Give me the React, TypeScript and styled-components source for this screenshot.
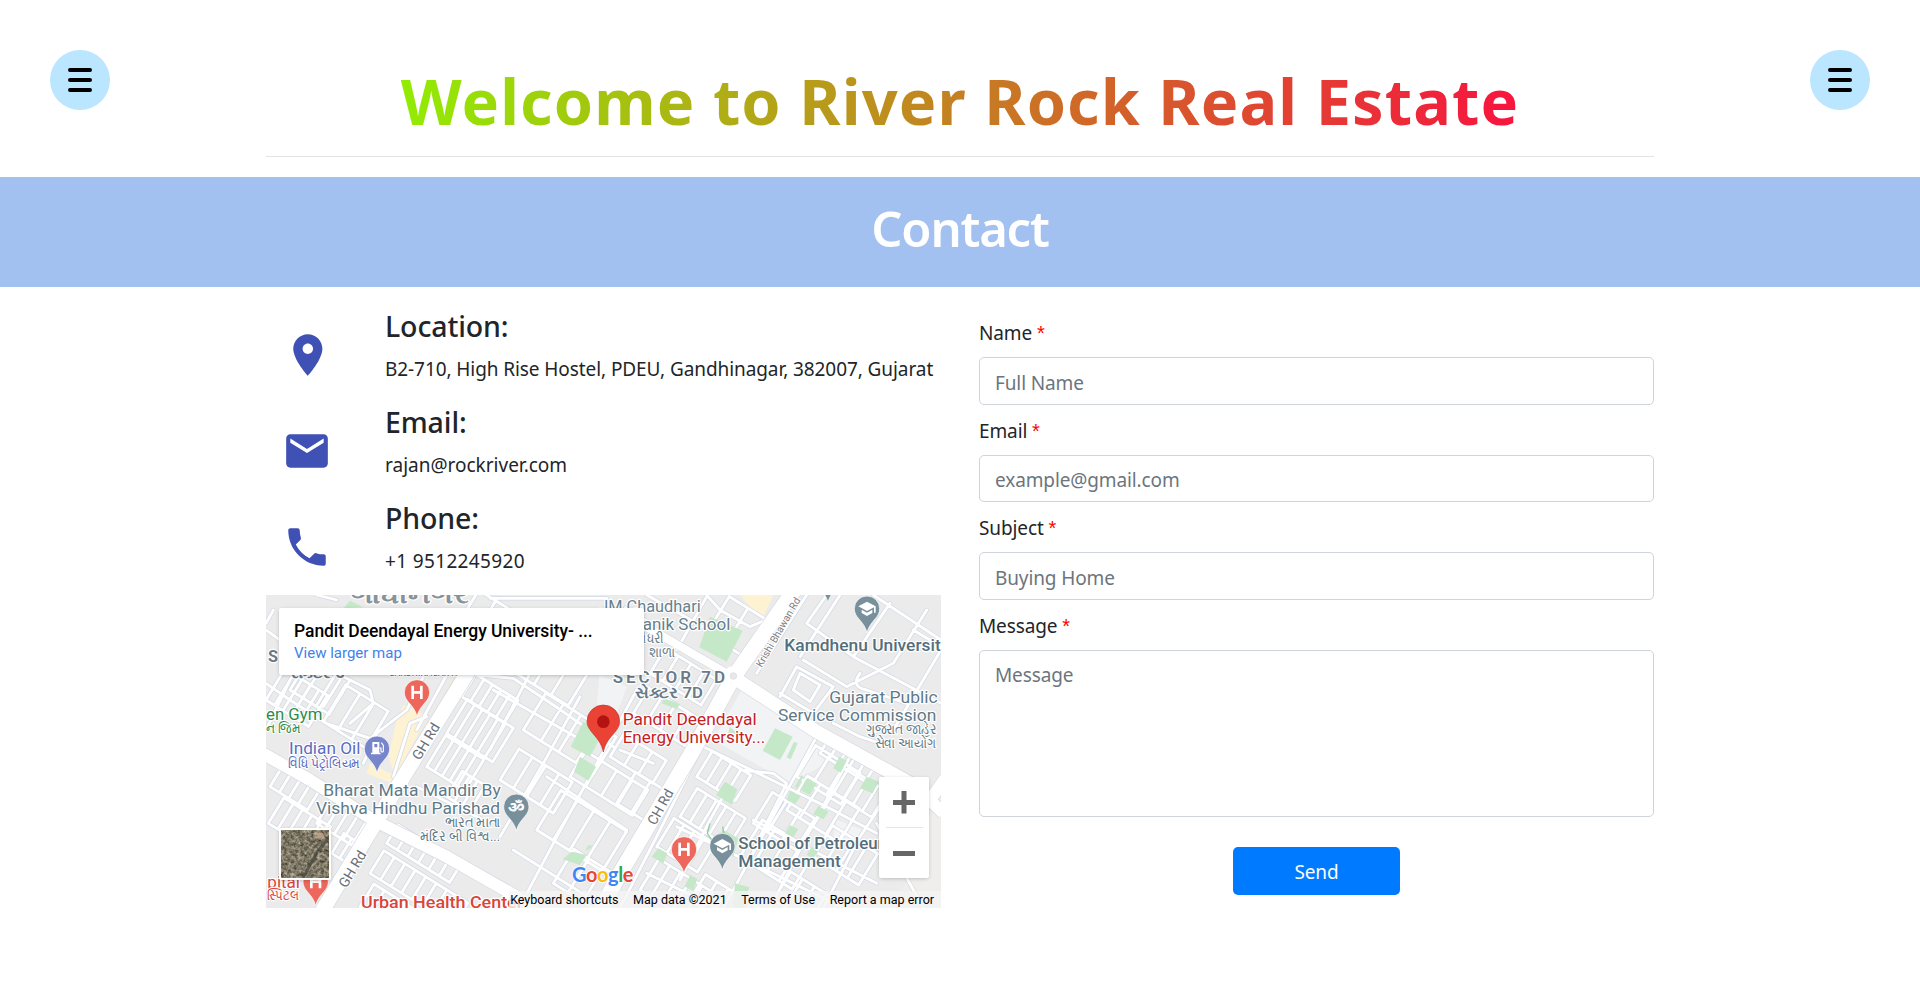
import React from 'react';
import styled, { createGlobalStyle } from 'styled-components';

const GlobalStyle = createGlobalStyle`
  * { box-sizing: border-box; }
  body {
    margin: 0;
    background: #fff;
    color: #212529;
    font-family: 'Noto Sans', 'Open Sans', sans-serif;
    font-size: 19px;
    letter-spacing: -0.12px;
  }
`;

const Page = styled.div`
  min-height: 990px;
  display: flex;
  flex-direction: column;
`;

const Header = styled.header`
  height: 177px;
  padding: 50px 50px 0;
  display: flex;
  justify-content: space-between;
  align-items: flex-start;
`;

const MenuButton = styled.button`
  width: 60px;
  height: 60px;
  padding: 0;
  border: 0;
  border-radius: 50%;
  background: #bae6ff;
  display: flex;
  flex-direction: column;
  align-items: center;
  justify-content: center;
  gap: 6px;
`;

const MenuBar = styled.span`
  width: 24px;
  height: 4px;
  border-radius: 2px;
  background: #000;
`;

const TitleBlock = styled.div`
  width: 1388px;
  height: 107px;
  padding-top: 11px;
  border-bottom: 1px solid #e4e4e5;
  display: flex;
  justify-content: center;
`;

const Title = styled.h1`
  margin: 0;
  height: 88px;
  font-size: 63px;
  font-weight: 700;
  line-height: 80px;
  letter-spacing: 1.1px;
  white-space: nowrap;
  color: transparent;
  background: linear-gradient(to right, #92ec04, #f7143f);
  background-clip: text;
  -webkit-background-clip: text;
`;

const Band = styled.section`
  height: 110px;
  padding-top: 21px;
  background: #a3c1f0;
  text-align: center;
`;

const BandTitle = styled.h2`
  margin: 0;
  font-size: 49px;
  font-weight: 600;
  line-height: 60px;
  letter-spacing: -1.2px;
  color: #fff;
`;

const Main = styled.main`
  width: 1388px;
  margin: 0 auto;
  display: grid;
  grid-template-columns: 675px 675px;
  column-gap: 38px;
  align-items: start;
`;

const InfoColumn = styled.div`
  padding-top: 20px;
`;

const InfoItem = styled.div`
  height: 96px;
  display: grid;
  grid-template-columns: 103px 1fr;
  padding-left: 16px;
`;

const InfoIcon = styled.svg`
  width: 50px;
  height: 50px;
  margin-top: 22.5px;
  fill: #3f51b5;
`;

const InfoHeading = styled.h4`
  margin: 1px 0 10px;
  font-size: 28.5px;
  font-weight: 500;
  line-height: 36px;
`;

const InfoText = styled.p<{ $spacing: number }>`
  margin: 0;
  line-height: 30px;
  white-space: nowrap;
  letter-spacing: ${(p) => p.$spacing}px;
`;

const Form = styled.form`
  padding-top: 31.25px;
  display: flex;
  flex-direction: column;
`;

const Label = styled.label`
  line-height: 30px;
  margin-bottom: 9px;
`;

const Required = styled.span`
  color: #f00;
  font-family: 'Liberation Sans', sans-serif;
  font-size: 20px;
`;

const Input = styled.input`
  height: 47.5px;
  margin-bottom: 11px;
  padding: 3px 15px 0;
  border: 1px solid #ced4da;
  border-radius: 5px;
  font: inherit;
  letter-spacing: inherit;
  outline: none;
  &::placeholder { color: #6c757d; opacity: 1; }
`;

const TextArea = styled.textarea`
  height: 167.5px;
  padding: 9px 15px;
  border: 1px solid #ced4da;
  border-radius: 5px;
  font: inherit;
  line-height: 30px;
  letter-spacing: inherit;
  resize: none;
  outline: none;
  &::placeholder { color: #6c757d; opacity: 1; }
`;

const SendButton = styled.button`
  align-self: center;
  width: 167px;
  height: 48px;
  margin-top: 30px;
  padding: 2px 0 0;
  border: 0;
  border-radius: 5px;
  background: #007bff;
  color: #fff;
  font: inherit;
  letter-spacing: inherit;
`;

const MapFrame = styled.div`
  position: relative;
  width: 675px;
  height: 313px;
  overflow: hidden;
  font-family: Roboto, sans-serif;
  letter-spacing: 0;
`;

const MapDrawing = styled.svg`
  display: block;
  width: 675px;
  height: 313px;
`;

const PlaceCard = styled.div`
  position: absolute;
  left: 13px;
  top: 13px;
  width: 365px;
  height: 67px;
  padding: 12px 15px 0;
  border-radius: 2px;
  background: #fff;
  box-shadow: 0 1px 4px -1px rgba(0, 0, 0, 0.3);
`;

const PlaceName = styled.div`
  color: #000;
  font-size: 17.5px;
  font-weight: 500;
  line-height: 22px;
  letter-spacing: -0.06px;
`;

const PlaceLink = styled.a`
  display: block;
  color: #427fed;
  font-size: 15px;
  line-height: 22px;
`;

const Satellite = styled.svg`
  position: absolute;
  left: 13px;
  top: 233px;
  width: 52px;
  height: 52px;
  border: 2px solid #fff;
  border-radius: 2px;
  box-shadow: 0 1px 4px -1px rgba(0, 0, 0, 0.3);
`;

const ZoomControl = styled.div`
  position: absolute;
  left: 613px;
  top: 182px;
  width: 50px;
  height: 101px;
  border-radius: 2px;
  background: #fff;
  box-shadow: 0 1px 4px -1px rgba(0, 0, 0, 0.3);
  display: flex;
  flex-direction: column;
  align-items: center;
`;

const ZoomButton = styled.svg`
  width: 50px;
  height: 50px;
  fill: #666;
`;

const ZoomDivider = styled.div`
  width: 37px;
  height: 1px;
  background: #e6e6e6;
`;

const Attribution = styled.div`
  position: absolute;
  right: 0;
  bottom: 0;
  height: 17px;
  padding: 0 7px 0 1px;
  display: flex;
  gap: 14.5px;
  background: rgba(245, 245, 245, 0.78);
  color: #000;
  font-size: 12.5px;
  line-height: 17px;
  white-space: nowrap;
`;

/* City blocks: parallel streets that follow the slanted grid of the town. */
type Block = [x: number, y: number, length: number, count: number, gap: number];
const blocks: Block[] = [
  [18, 330, 110, 6, 30], [90, 300, 120, 4, 46], [190, 395, 130, 4, 50], [30, 590, 80, 5, 33],
  [25, 700, 90, 6, 33], [170, 700, 85, 5, 31], [215, 790, 70, 4, 28], [500, 530, 110, 6, 27],
  [560, 430, 120, 7, 27], [605, 320, 80, 6, 30], [560, 620, 90, 4, 27], [380, 760, 65, 7, 37],
  [330, 850, 80, 9, 37], [300, 950, 80, 9, 37], [720, 220, 150, 5, 60], [790, 420, 130, 5, 62],
  [720, 570, 110, 5, 47], [830, 720, 140, 5, 58], [880, 880, 120, 4, 52], [930, 560, 90, 5, 55],
  [1050, 500, 80, 4, 50], [1070, 640, 110, 3, 52], [1120, 370, 90, 5, 47], [1170, 250, 90, 5, 45],
  [1310, 560, 90, 5, 34], [1260, 680, 100, 6, 34], [1190, 770, 100, 5, 36], [1140, 900, 110, 6, 38],
  [1290, 930, 90, 9, 40], [1440, 800, 130, 5, 46], [1480, 700, 110, 4, 50], [1610, 560, 110, 4, 52],
  [1580, 660, 120, 5, 46], [1680, 490, 60, 6, 32], [1720, 610, 90, 5, 34], [1660, 800, 110, 5, 40],
  [1540, 930, 100, 7, 42], [1340, 130, 130, 3, 66], [620, 60, 70, 5, 60], [1050, 130, 90, 3, 50],
];
const streets = blocks
  .map(([x, y, length, count, gap]) => {
    const ux = length * 0.52, uy = length * -0.85;
    const vx = gap * 0.85, vy = gap * 0.53;
    const rungs = Array.from({ length: count }, (_, i) => `M${x + vx * i} ${y + vy * i}l${ux} ${uy}`).join('');
    const w = vx * (count - 1), h = vy * (count - 1);
    return `${rungs}M${x} ${y}l${w} ${h}M${x + ux} ${y + uy}l${w} ${h}`;
  })
  .join('');

const lanes =
  'M18 280L90 330L200 400L330 445L440 360L500 240M100 250L18 420M240 255L330 300L340 340L270 400M190 350L240 270' +
  'M350 430L310 520M400 560L450 400L500 380M470 590L690 700M560 255L470 420' +
  'M660 255L760 265L880 345L1060 470M700 300L1000 470M810 250L690 480M960 320L850 520L720 740' +
  'M1130 300L1000 540L880 760L790 930M860 560L1100 720M760 780L1030 950M1180 520L1080 480' +
  'M1330 470L1700 650L1850 730M1320 480L1200 720L1080 954M1400 600L1350 690L1260 870M1440 540L1540 550L1580 580L1480 780' +
  'M1670 440L1560 640L1420 900L1390 954M1770 500L1640 740L1530 954M1900 590L1800 740L1690 954' +
  'M1250 710L1560 860L1750 954M1160 850L1370 954M1480 690L1850 880M1850 700L1990 954' +
  'M1490 250L1640 15M1640 100L1780 200L2043 340M1640 100L1700 15M1780 200L1890 40M1630 210L1760 290L1900 220L2000 60' +
  'M1620 200L1740 15M1560 320L1610 230L1720 290L1660 370L1560 310M1600 300L1620 250L1680 285L1650 335L1600 300' +
  'M1800 250Q1770 290 1820 300L1940 340M1900 420L2043 180M1720 400L1800 440L1890 470M1960 120L2043 170M1840 15L2043 150' +
  'M1340 15L1380 60L1470 110L1540 80M1160 15L1400 150M1250 180L1340 20M690 25L1040 25M40 60L18 100M18 120L60 150M230 30L170 15';

const Pin = ({ x, y, color, children }: { x: number; y: number; color: string; children?: React.ReactNode }) => (
  <g transform={`translate(${x} ${y})`}>
    <path
      d="M0 73C-4 54-14 43-25 30C-33 21-38 12-38 0A38 38 0 0 1 38 0C38 12 33 21 25 30C14 43 4 54 0 73Z"
      fill={color}
      stroke="#fff"
      strokeWidth="3"
      strokeOpacity="0.7"
    />
    {children}
  </g>
);

const Hospital = () => <path d="M-17-20h8v16H9v-16h8v40H9V4H-9v16h-8z" fill="#fff" />;

const School = () => (
  <g fill="#fff">
    <path d="M-26-7L0-21L26-7V12H21V-4L0 7Z" />
    <path d="M-16 3L0 12L16 3V13L0 22L-16 13Z" />
  </g>
);

interface PlaceLabel {
  text: string;
  x: number;
  y: number;
  w: number;
  size?: number;
  color?: string;
  weight?: number;
  rotate?: number;
  spaced?: boolean;
}
const slate = '#5f7a88';
const labels: PlaceLabel[] = [
  { text: 'ગાંધીનગર', x: 272, y: 38, w: 354, size: 72, color: '#8a9299', weight: 700 },
  { text: 'S', x: 24, y: 217, w: 30, size: 52, color: '#6b7a86', weight: 700 },
  { text: 'સેક્ટર 6', x: 90, y: 264, w: 164, size: 46, color: '#6b7a86', weight: 700 },
  { text: 'GANDHINAGAR H', x: 386, y: 257, w: 206, size: 30, color: '#c55a50', weight: 500 },
  { text: 'en Gym', x: 18, y: 390, w: 169, color: '#2b8c4a' },
  { text: 'ન જિમ', x: 18, y: 428, w: 103, size: 41, color: '#2b8c4a' },
  { text: 'Indian Oil', x: 87, y: 492, w: 214, color: '#5c6bc0' },
  { text: 'વિધિ પેટ્રોલિયમ', x: 83, y: 533, w: 217, size: 41, color: '#5c6bc0' },
  { text: 'Bharat Mata Mandir By', x: 190, y: 618, w: 532, color: slate },
  { text: 'Vishva Hindhu Parishad', x: 168, y: 671, w: 552, color: slate },
  { text: 'ભારત માતા', x: 554, y: 712, w: 166, size: 41, color: slate },
  { text: 'મંદિર બી વિશ્વ...', x: 480, y: 754, w: 240, size: 41, color: slate },
  { text: 'GH Rd', x: 479, y: 513, w: 120, size: 42, color: '#6b6f76', rotate: -59 },
  { text: 'GH Rd', x: 259, y: 896, w: 120, size: 42, color: '#6b6f76', rotate: -59 },
  { text: 'CH Rd', x: 1186, y: 708, w: 115, size: 42, color: '#6b6f76', rotate: -61 },
  { text: 'Krishi Bhawan Rd', x: 1505, y: 234, w: 235, size: 31, color: '#7c8085', rotate: -60 },
  { text: 'pital', x: 22, y: 893, w: 98, color: '#d8453b' },
  { text: 'સ્પિટલ', x: 20, y: 931, w: 97, size: 41, color: '#d8453b' },
  { text: 'Urban Health Center', x: 303, y: 953, w: 486, color: '#d8453b', weight: 500 },
  { text: 'JM Chaudhari', x: 1018, y: 66, w: 304, color: '#67808c' },
  { text: 'anik School', x: 1148, y: 119, w: 263, color: '#67808c' },
  { text: 'ચૌધરી', x: 1120, y: 160, w: 90, size: 41, color: '#67808c' },
  { text: 'શાળા', x: 1166, y: 200, w: 78, size: 41, color: '#67808c' },
  { text: 'SECTOR 7D', x: 1058, y: 280, w: 337, size: 51, color: '#6b7a86', weight: 600, spaced: true },
  { text: 'સેક્ટર 7D', x: 1125, y: 325, w: 204, size: 44, color: '#6b7a86', weight: 600 },
  { text: 'Pandit Deendayal', x: 1088, y: 406, w: 402, color: '#c5221f' },
  { text: 'Energy University...', x: 1088, y: 459, w: 428, color: '#c5221f' },
  { text: 'Kamdhenu Universit', x: 1573, y: 182, w: 469, color: '#546e7a', weight: 500 },
  { text: 'Gujarat Public', x: 1708, y: 339, w: 325, color: slate },
  { text: 'Service Commission', x: 1554, y: 392, w: 475, color: slate },
  { text: 'ગુજરાત જાહેર', x: 1817, y: 433, w: 213, size: 41, color: slate },
  { text: 'સેવા આયોગ', x: 1844, y: 474, w: 184, size: 41, color: slate },
  { text: 'School of Petroleum', x: 1435, y: 778, w: 462, color: '#546e7a', weight: 500 },
  { text: 'Management', x: 1435, y: 831, w: 307, color: '#546e7a', weight: 500 },
];

const CityMap = () => (
  <MapDrawing viewBox="18 15 2025 939" fontFamily="Roboto, 'Noto Sans', sans-serif">
    <rect x="18" y="15" width="2025" height="939" fill="#ebebeb" />
    <path fill="#f1f3f5" d="M1445 300L1650 430L1700 520L1590 580L1360 450Z M1018 255L1100 290L1060 400L1010 350Z M1730 690L1810 720L1780 770L1720 740Z" />
    <path fill="#f0eeec" d="M1980 690L2043 650V954H1880L1960 850Z" />
    <path fill="#fdf3d3" d="M410 390L430 345L470 360L500 380L470 440L405 560L385 500Z M330 520L410 560L395 580L320 550Z M1440 15H1540L1510 80L1470 50Z" />

    <g fill="none" strokeLinejoin="round" strokeLinecap="round">
      <path d={streets + lanes} stroke="#d5dae4" strokeWidth="13" />
      <path d={streets + lanes} stroke="#fff" strokeWidth="8.5" />
      <path d="M620 200L440 520" stroke="#f3e6b9" strokeWidth="5" />
    </g>

    <g fill="#c5e8c8">
      <path d="M270 32L310 52L250 55Z M970 395L1030 425L990 500L932 470Z M960 500L1008 530L985 572L942 545Z" />
      <path d="M1350 80L1448 122L1400 215L1318 172Z M1212 325L1260 342L1250 358L1205 340Z" />
      <path d="M1545 415L1598 440L1560 510L1508 482Z M1602 455L1613 460L1592 508L1580 502Z M1410 410L1430 430L1400 445Z" />
      <path d="M1395 575L1432 598L1415 645L1368 615Z M1640 565L1670 580L1650 615L1620 600Z M1625 555L1630 560L1612 595L1604 590Z" />
      <path d="M1590 602L1622 618L1605 643L1580 630Z M1738 500L1760 512L1742 548L1720 535Z M1820 560L1856 575L1838 610L1800 595Z" />
      <path d="M1675 648L1706 665L1690 688L1660 672Z M1590 705L1615 718L1600 742L1575 730Z M1195 775L1222 790L1210 820L1175 800Z" />
      <path d="M1390 720L1435 745L1420 800L1370 740Z M1290 855L1312 866L1300 902L1275 890Z M1425 880L1468 892L1450 954H1418Z" />
      <path d="M935 785L980 795L960 825L908 808Z M985 765L1000 768L975 785Z M1655 770L1675 785L1660 805L1640 795Z" />
    </g>
    <path d="M1350 700L1342 730L1375 780M1388 710L1395 750" fill="none" stroke="#8fd19e" strokeWidth="4" />

    <g fill="none" strokeLinejoin="round">
      <g stroke="#d5d9e2">
        <path d="M1120 88L1420 262" strokeWidth="28" />
        <path d="M665 180L510 430L345 700L180 974" strokeWidth="48" />
        <path d="M-10 480L150 570L340 690L560 800L830 954" strokeWidth="40" />
        <path d="M1420 262L1670 425L1960 585" strokeWidth="44" />
        <path d="M1610 -10L1420 262L1300 480L1190 665L1080 850L1020 964" strokeWidth="50" />
        <path d="M2060 560L2010 630L2050 670" strokeWidth="40" />
      </g>
      <g stroke="#fff">
        <path d="M1120 88L1420 262" strokeWidth="24" />
        <path d="M665 180L510 430L345 700L180 974" strokeWidth="44" />
        <path d="M-10 480L150 570L340 690L560 800L830 954" strokeWidth="36" />
        <path d="M1420 262L1670 425L1960 585" strokeWidth="40" />
        <path d="M1610 -10L1420 262L1300 480L1190 665L1080 850L1020 964" strokeWidth="46" />
        <path d="M2060 560L2010 630L2050 670" strokeWidth="36" />
      </g>
      <circle cx="1420" cy="258" r="30" fill="#fff" />
      <circle cx="1420" cy="258" r="10" fill="#e8e8e8" stroke="#d5d9e2" strokeWidth="2" />
    </g>

    <Pin x={471} y={307} color="#ee675c"><Hospital /></Pin>
    <Pin x={167} y={875} color="#ee675c"><Hospital /></Pin>
    <Pin x={1272} y={778} color="#ee675c"><Hospital /></Pin>
    <Pin x={351} y={476} color="#7785cb">
      <path d="M-14-20H7V12H11V17H-18V12H-14Z M-8-14V-4H1V-14Z" fill="#fff" fillRule="evenodd" />
      <path d="M7-2H12V8Q16 12 19 8V-10L13-18" fill="none" stroke="#fff" strokeWidth="3.5" />
    </Pin>
    <Pin x={769} y={650} color="#78909c">
      <text x="0" y="18" textAnchor="middle" fontSize="50" fontWeight="700" fill="#fff">ॐ</text>
    </Pin>
    <Pin x={1387} y={768} color="#78909c"><School /></Pin>
    <Pin x={1821} y={56} color="#78909c"><School /></Pin>
    <Pin x={1704} y={-35} color="#78909c" />

    <g stroke="#fff" strokeWidth="7" strokeLinejoin="round" paintOrder="stroke">
      {labels.map((l) => (
        <text
          key={`${l.text}${l.x}`}
          x={l.x}
          y={l.y}
          fontSize={l.size ?? 50}
          fontWeight={l.weight ?? 400}
          fill={l.color}
          textLength={l.w}
          lengthAdjust={l.spaced ? 'spacing' : 'spacingAndGlyphs'}
          transform={l.rotate ? `rotate(${l.rotate} ${l.x} ${l.y})` : undefined}
        >
          {l.text}
        </text>
      ))}
    </g>

    <g>
      <path d="M1030 486C1025 462 1014 448 1000 432C988 418 981 408 981 394A49 49 0 0 1 1079 394C1079 408 1072 418 1060 432C1046 448 1035 462 1030 486Z" fill="#ea4335" stroke="#b8382d" strokeWidth="2" />
      <circle cx="1030" cy="395" r="19" fill="#b31412" />
    </g>

    <text x="936" y="877" fontFamily="Lato, sans-serif" fontSize="60" fontWeight="400" textLength="184" stroke="#fff" strokeWidth="5" paintOrder="stroke">
      <tspan fill="#4285f4" fontWeight="700">G</tspan>
      <tspan fill="#ea4335" fontWeight="700">o</tspan>
      <tspan fill="#fbbc05" fontWeight="700">o</tspan>
      <tspan fill="#4285f4" fontWeight="700">g</tspan>
      <tspan fill="#34a853" fontWeight="700">l</tspan>
      <tspan fill="#ea4335" fontWeight="700">e</tspan>
    </text>
  </MapDrawing>
);

const SatelliteThumb = () => (
  <Satellite viewBox="0 0 48 48">
    <filter id="ground" x="0" y="0" width="100%" height="100%" colorInterpolationFilters="sRGB">
      <feTurbulence type="fractalNoise" baseFrequency="0.3" numOctaves="4" seed="7" />
      <feColorMatrix values="0.75 0 0 0 0.12  0.72 0 0 0 0.11  0.66 0 0 0 0.07  0 0 0 0 1" />
    </filter>
    <rect width="48" height="48" fill="#7d7666" />
    <rect width="48" height="48" filter="url(#ground)" />
    <path d="M48 8L36 22L22 48" fill="none" stroke="#45463f" strokeWidth="3" opacity="0.7" />
    <path d="M0 18L12 0M12 0L48 26" fill="none" stroke="#57544a" strokeWidth="1.5" opacity="0.5" />
    <path d="M34 2l8 1 2 6-7-1z" fill="#c9a58c" opacity="0.8" />
  </Satellite>
);

const contacts = [
  {
    title: 'Location:',
    text: 'B2-710, High Rise Hostel, PDEU, Gandhinagar, 382007, Gujarat',
    spacing: -0.08,
    viewBox: '-0.4 0 24 24',
    icon: 'M12 2C8.13 2 5 5.13 5 9c0 5.25 7 13 7 13s7-7.75 7-13c0-3.87-3.13-7-7-7zm0 9.5c-1.38 0-2.5-1.12-2.5-2.5s1.12-2.5 2.5-2.5 2.5 1.12 2.5 2.5-1.12 2.5-2.5 2.5z',
  },
  {
    title: 'Email:',
    text: 'rajan@rockriver.com',
    spacing: 0,
    viewBox: '0 0 24 24',
    icon: 'M20 4H4c-1.1 0-1.99.9-1.99 2L2 18c0 1.1.9 2 2 2h16c1.1 0 2-.9 2-2V6c0-1.1-.9-2-2-2zm0 4l-8 5-8-5V6l8 5 8-5v2z',
  },
  {
    title: 'Phone:',
    text: '+1 9512245920',
    spacing: 0.35,
    viewBox: '0 0 24 24',
    icon: 'M6.62 10.79c1.44 2.83 3.76 5.14 6.59 6.59l2.2-2.2c.27-.27.67-.36 1.02-.24 1.12.37 2.33.57 3.57.57.55 0 1 .45 1 1V20c0 .55-.45 1-1 1-9.39 0-17-7.61-17-17 0-.55.45-1 1-1h3.5c.55 0 1 .45 1 1 0 1.25.2 2.45.57 3.57.11.35.03.74-.25 1.02l-2.2 2.2z',
  },
];

const fields = [
  { label: 'Name', placeholder: 'Full Name' },
  { label: 'Email', placeholder: 'example@gmail.com' },
  { label: 'Subject', placeholder: 'Buying Home' },
];

const Menu = () => (
  <MenuButton aria-label="Menu">
    <MenuBar />
    <MenuBar />
    <MenuBar />
  </MenuButton>
);

export default function App() {
  return (
    <Page>
      <GlobalStyle />
      <Header>
        <Menu />
        <TitleBlock>
          <Title>Welcome to River Rock Real Estate</Title>
        </TitleBlock>
        <Menu />
      </Header>
      <Band>
        <BandTitle>Contact</BandTitle>
      </Band>
      <Main>
        <InfoColumn>
          {contacts.map((c) => (
            <InfoItem key={c.title}>
              <InfoIcon viewBox={c.viewBox}>
                <path d={c.icon} />
              </InfoIcon>
              <div>
                <InfoHeading>{c.title}</InfoHeading>
                <InfoText $spacing={c.spacing}>{c.text}</InfoText>
              </div>
            </InfoItem>
          ))}
          <MapFrame>
            <CityMap />
            <PlaceCard>
              <PlaceName>Pandit Deendayal Energy University- ...</PlaceName>
              <PlaceLink>View larger map</PlaceLink>
            </PlaceCard>
            <SatelliteThumb />
            <ZoomControl>
              <ZoomButton viewBox="0 0 50 50">
                <path d="M14 23h8.500v-9h5v9H36v5h-8.500v8.500h-5V28H14z" />
              </ZoomButton>
              <ZoomDivider />
              <ZoomButton viewBox="0 0 50 50">
                <path d="M14 23h22v5H14z" />
              </ZoomButton>
            </ZoomControl>
            <Attribution>
              <span>Keyboard shortcuts</span>
              <span>Map data ©2021</span>
              <span>Terms of Use</span>
              <span>Report a map error</span>
            </Attribution>
          </MapFrame>
        </InfoColumn>
        <Form>
          {fields.map((f) => (
            <React.Fragment key={f.label}>
              <Label>
                {f.label} <Required>*</Required>
              </Label>
              <Input placeholder={f.placeholder} />
            </React.Fragment>
          ))}
          <Label>
            Message <Required>*</Required>
          </Label>
          <TextArea placeholder="Message" />
          <SendButton type="button">Send</SendButton>
        </Form>
      </Main>
    </Page>
  );
}
